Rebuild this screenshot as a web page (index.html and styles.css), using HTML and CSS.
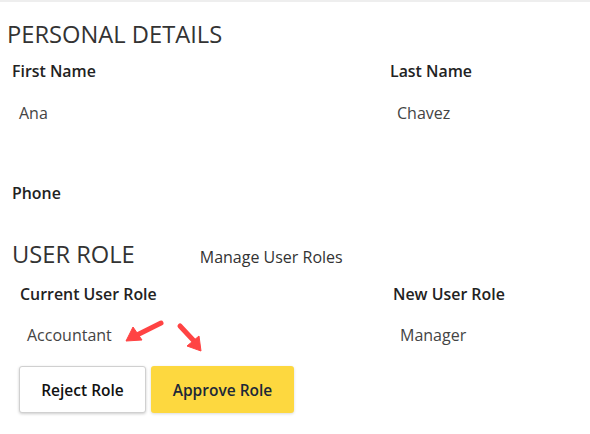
FILE: index.html
```html
<!DOCTYPE html>
<html>
<head>
<meta charset="utf-8">
<link rel="stylesheet" href="styles.css">
</head>
<body>
<div class="topbar"></div>
<section class="personal">
  <h2 class="title">PERSONAL DETAILS</h2>
  <div class="grid grid-personal">
    <div class="field">
      <div class="label">First Name</div>
      <div class="value">Ana</div>
    </div>
    <div class="field">
      <div class="label">Last Name</div>
      <div class="value">Chavez</div>
    </div>
    <div class="field field-phone">
      <div class="label">Phone</div>
      <div class="value"></div>
    </div>
  </div>
</section>
<section class="role">
  <div class="role-head">
    <h2 class="title title-role">USER ROLE</h2>
    <span class="manage">Manage User Roles</span>
  </div>
  <div class="grid grid-role">
    <div class="field">
      <div class="label">Current User Role</div>
      <div class="value">Accountant</div>
    </div>
    <div class="field">
      <div class="label">New User Role</div>
      <div class="value">Manager</div>
    </div>
  </div>
  <div class="actions">
    <button class="btn btn-reject">Reject Role</button>
    <button class="btn btn-approve">Approve Role</button>
  </div>
  <svg class="arrows" width="90" height="45" viewBox="0 0 90 45">
    <g fill="#ff4343" stroke="#ff4343">
      <line x1="41" y1="8" x2="17" y2="20" stroke-width="5" stroke-linecap="round"/>
      <polygon points="6,26 13,12 22,25" stroke-width="1" stroke-linejoin="round"/>
      <line x1="60" y1="11" x2="74" y2="26" stroke-width="5" stroke-linecap="round"/>
      <polygon points="81,36 67,31 79,21" stroke-width="1" stroke-linejoin="round"/>
    </g>
  </svg>
</section>
</body>
</html>
```
FILE: styles.css
```css
* { box-sizing: border-box; }
html, body { margin: 0; padding: 0; background: #fff; }
body {
  font-family: "Open Sans", "Liberation Sans", sans-serif;
  color: #333;
  width: 590px;
  height: 434px;
  overflow: hidden;
}
.topbar { height: 2px; background: #eeeeee; }
.title {
  margin: 0;
  font-weight: 400;
  font-size: 23.7px;
  line-height: 32px;
  color: #333;
}
.personal { padding: 16px 0 0 7px; }
.grid { display: grid; }
.grid-personal {
  grid-template-columns: 378px 1fr;
  padding-left: 5px;
  margin-top: 11px;
  row-gap: 60px;
}
.label {
  font-size: 15.9px;
  font-weight: 600;
  line-height: 20px;
  color: #222;
}
.value {
  font-size: 16px;
  line-height: 20px;
  color: #444;
  padding-left: 7px;
  margin-top: 22px;
  min-height: 20px;
}
.field-phone .value { display: none; }
.role { position: relative; padding: 35px 0 0 12px; }
.role-head { display: flex; align-items: baseline; gap: 65px; }
.manage { font-size: 16px; color: #333; }
.grid-role {
  grid-template-columns: 373px 1fr;
  padding-left: 8px;
  margin-top: 14px;
}
.grid-role .value { margin-top: 21px; }
.actions { display: flex; gap: 5px; padding-left: 7px; margin-top: 21px; }
.btn {
  font-family: "Open Sans", "Liberation Sans", sans-serif;
  font-size: 15.5px;
  font-weight: 600;
  height: 47px;
  border-radius: 3px;
  cursor: pointer;
}
.btn-reject {
  width: 127px;
  background: #fff;
  color: #111;
  border: 1px solid #d0d0d0;
  box-shadow: 0 1px 3px rgba(0,0,0,0.2);
}
.btn-approve {
  width: 143px;
  background: #fdd83f;
  color: #1c2838;
  border: none;
  box-shadow: 0 1px 3px rgba(0,0,0,0.15);
}
.arrows { position: absolute; left: 120px; top: 112px; }
```
